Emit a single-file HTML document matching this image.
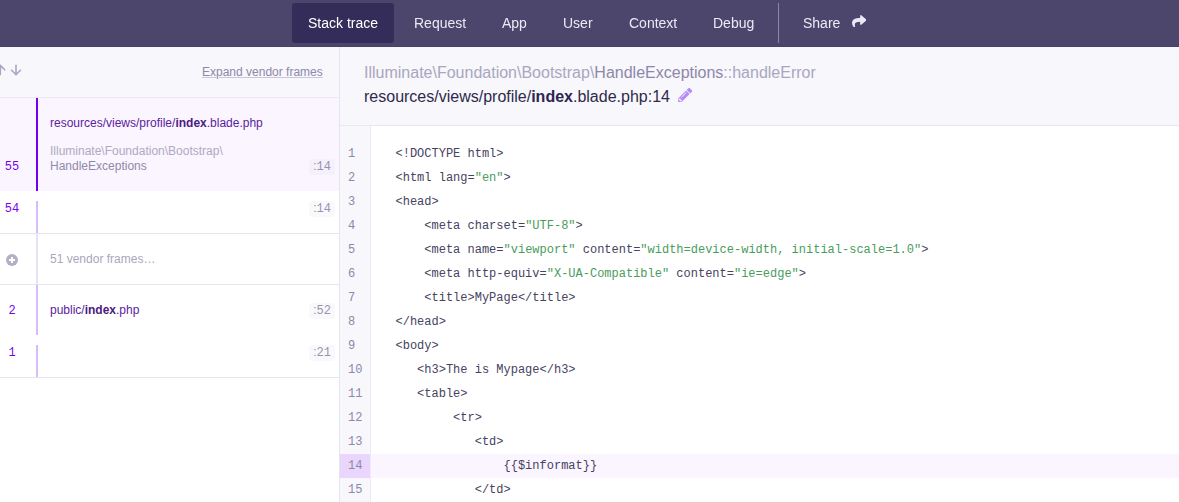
<!DOCTYPE html>
<html><head><meta charset="utf-8">
<style>
*{margin:0;padding:0;box-sizing:border-box}
html,body{width:1179px;height:502px;overflow:hidden;background:#fff;font-family:"Liberation Sans",sans-serif;}
.abs{position:absolute}
#nav{will-change:transform;position:absolute;left:0;top:0;width:1179px;height:47px;background:#4c466c;border-bottom:1px solid #474166}
.tab{position:absolute;top:3px;height:40px;line-height:40px;font-size:14px;color:#ece9f5;padding:0 16px;white-space:nowrap;border-radius:3px}
.tab.active{background:#352d59;color:#fff}
.sep{position:absolute;left:778px;top:3px;width:1px;height:40px;background:#8c87a8}
#left{position:absolute;left:0;top:47px;width:339px;height:455px;background:#fff}
#lhead{position:absolute;left:0;top:0;width:339px;height:51px;background:#f7f7fc;border-bottom:1px solid #ebebf3}
#vline{position:absolute;left:339px;top:47px;width:1px;height:455px;background:#e6e5ef}
#rhead{position:absolute;left:340px;top:47px;width:839px;height:79px;background:#f7f7fc;border-bottom:1px solid #e8e8f0}
.t12{font-size:12px;white-space:nowrap;position:absolute}
.num{position:absolute;left:0;width:24px;text-align:center;font-size:12px;font-family:"Liberation Mono",monospace;color:#7a00ee}
.bar{position:absolute;left:36px;width:2px;background:#d9bdfb}
.line{position:absolute;left:309px;width:26px;padding-left:4.2px;font-family:"Liberation Mono",monospace;font-size:12px;color:#9893b0;background:rgba(232,232,244,0.25);border-radius:3px;height:16px;line-height:16px;white-space:nowrap}
.line i{font-style:normal;font-family:"Liberation Sans",sans-serif;line-height:0}
.hr{position:absolute;left:0;width:339px;height:1px;background:#e6e5ef}
#gutter{position:absolute;left:340px;top:126px;width:31px;height:376px;background:#f7f7fc;border-right:1px solid #ececf4}
.ln{position:absolute;left:348px;font-family:"Liberation Mono",monospace;font-size:12px;color:#8d88a8;height:24px;line-height:24px}
.code{position:absolute;left:395.5px;font-family:"Liberation Mono",monospace;font-size:12px;color:#47425f;height:24px;line-height:24px;white-space:pre}
.s{color:#4a9c5c}
</style></head><body>
<div id="nav">
  <div class="tab active" style="left:292px">Stack trace</div>
  <div class="tab" style="left:398px">Request</div>
  <div class="tab" style="left:486px">App</div>
  <div class="tab" style="left:547px">User</div>
  <div class="tab" style="left:613px">Context</div>
  <div class="tab" style="left:697px">Debug</div>
  <div class="sep"></div>
  <div class="tab" style="left:787px">Share</div>
<svg class="abs" style="left:851.8px;top:14.6px" width="14.5" height="12.6" viewBox="0 31 512 449"><path fill="#ece9f5" d="M503.691 189.836L327.687 37.851C312.281 24.546 288 35.347 288 56.015v80.053C127.371 137.907 0 170.1 0 322.326c0 61.441 39.581 122.309 83.333 154.132 13.653 9.931 33.111-2.533 28.077-18.631C66.066 312.814 132.917 274.316 288 272.085V360c0 20.7 24.3 31.453 39.687 18.164l176.004-152c11.071-9.562 11.086-26.753 0-36.328z"/></svg>
</div>

<div id="left">
  <div id="lhead"></div>
</div>
<div id="vline"></div>
<!-- left header arrows -->
<svg class="abs" style="left:0;top:60px" width="26" height="20" viewBox="0 0 26 20">
  <g fill="none" stroke="#a9a5c3" stroke-width="1.6" stroke-linecap="round" stroke-linejoin="round">
    <path d="M0.3 14.6V5.4M-4.1 9.8L0.3 5.3L4.7 9.8"/>
    <path d="M16 5.4V14.6M11.6 10.2L16 14.7L20.4 10.2"/>
  </g>
</svg>
<div class="t12" style="left:202px;top:63.8px;line-height:16px;color:#8d88a8;text-decoration:underline;text-decoration-color:#c9c5dc">Expand vendor frames</div>

<!-- frame 55 selected -->
<div class="abs" style="left:0;top:98px;width:339px;height:93px;background:#faf5ff"></div>
<div class="abs" style="left:36px;top:98px;width:2px;height:93px;background:#7400f2"></div>
<div class="t12" style="left:50px;top:114.8px;line-height:16px;color:#5a22a0">resources/views/profile/<b style="color:#4b1a82">index</b>.blade.php</div>
<div class="t12" style="left:50px;top:143.8px;line-height:15px;color:#aeaac0">Illuminate\Foundation\Bootstrap\<br><span style="color:#8f8aa8">HandleExceptions</span></div>
<div class="num" style="top:158.8px;line-height:16px">55</div>
<div class="line" style="top:159px"><i>:</i>14</div>

<!-- frame 54 -->
<div class="bar" style="top:201px;height:32px"></div>
<div class="num" style="top:200.8px;line-height:16px">54</div>
<div class="line" style="top:201px"><i>:</i>14</div>
<div class="hr" style="top:233px"></div>

<!-- vendor frames -->
<div class="abs" style="left:36px;top:234px;width:2px;height:50px;background:#e6e5ef"></div>
<svg class="abs" style="left:6px;top:254px" width="12" height="12" viewBox="0 0 12 12">
  <circle cx="6" cy="6" r="6" fill="#b3afc6"/>
  <path d="M6 3V9M3 6H9" stroke="#fff" stroke-width="2"/>
</svg>
<div class="t12" style="left:50px;top:251px;line-height:16px;color:#aaa6bd">51 vendor frames&hellip;</div>
<div class="hr" style="top:284px"></div>

<!-- frame 2 -->
<div class="bar" style="top:285px;height:50px"></div>
<div class="num" style="top:302.8px;line-height:16px">2</div>
<div class="t12" style="left:50px;top:302px;line-height:16px;color:#5a22a0">public/<b style="color:#4b1a82">index</b>.php</div>
<div class="line" style="top:303px"><i>:</i>52</div>

<!-- frame 1 -->
<div class="bar" style="top:345px;height:32px"></div>
<div class="num" style="top:344.8px;line-height:16px">1</div>
<div class="line" style="top:345px"><i>:</i>21</div>
<div class="hr" style="top:377px"></div>

<div id="rhead"></div>
<div class="abs" style="left:364px;top:60.5px;font-size:16px;line-height:24px;white-space:nowrap;color:#aaa6bf">Illuminate\Foundation\Bootstrap\<span style="color:#8d88a8">HandleExceptions</span>::handleError</div>
<div class="abs" style="left:364px;top:84.5px;font-size:16px;line-height:24px;white-space:nowrap;color:#2f2a4a">resources/views/profile/<b style="color:#2d2552">index</b>.blade.php:14</div>
<svg class="abs" style="left:677.9px;top:87.9px" width="14.1" height="14.1" viewBox="0 0 512 512"><path fill="#b48cf6" d="M497.9 142.1l-46.1 46.1c-4.7 4.7-12.3 4.7-17 0l-111-111c-4.7-4.7-4.7-12.3 0-17l46.1-46.1c18.7-18.7 49.1-18.7 67.900 0l60.1 60.1c18.8 18.7 18.8 49.1 0 67.9zM284.2 99.8L21.6 362.4.4 483.9c-2.9 16.400 11.4 30.6 27.8 27.8l121.5-21.3 262.6-262.6c4.7-4.7 4.7-12.3 0-17l-111-111c-4.8-4.7-12.4-4.7-17.1 0zM124.1 339.9c-5.5-5.5-5.5-14.3 0-19.8l154-154c5.5-5.5 14.3-5.5 19.8 0s5.5 14.3 0 19.8l-154 154c-5.5 5.5-14.3 5.5-19.8 0zM88 424h48v36.3l-64.5 11.3-31.1-31.1L51.700 376H88v48z"/></svg>
<div id="gutter"></div>
<div class="abs" style="left:340px;top:454px;width:30px;height:24px;background:#ead6fd"></div>
<div class="abs" style="left:371px;top:454px;width:808px;height:24px;background:#faf5ff"></div>
<div class="ln" style="top:142px">1</div>
<div class="code" style="top:142px">&lt;!DOCTYPE html&gt;</div>
<div class="ln" style="top:166px">2</div>
<div class="code" style="top:166px">&lt;html lang=<span class="s">"en"</span>&gt;</div>
<div class="ln" style="top:190px">3</div>
<div class="code" style="top:190px">&lt;head&gt;</div>
<div class="ln" style="top:214px">4</div>
<div class="code" style="top:214px">    &lt;meta charset=<span class="s">"UTF-8"</span>&gt;</div>
<div class="ln" style="top:238px">5</div>
<div class="code" style="top:238px">    &lt;meta name=<span class="s">"viewport"</span> content=<span class="s">"width=device-width, initial-scale=1.0"</span>&gt;</div>
<div class="ln" style="top:262px">6</div>
<div class="code" style="top:262px">    &lt;meta http-equiv=<span class="s">"X-UA-Compatible"</span> content=<span class="s">"ie=edge"</span>&gt;</div>
<div class="ln" style="top:286px">7</div>
<div class="code" style="top:286px">    &lt;title&gt;MyPage&lt;/title&gt;</div>
<div class="ln" style="top:310px">8</div>
<div class="code" style="top:310px">&lt;/head&gt;</div>
<div class="ln" style="top:334px">9</div>
<div class="code" style="top:334px">&lt;body&gt;</div>
<div class="ln" style="top:358px">10</div>
<div class="code" style="top:358px">   &lt;h3&gt;The is Mypage&lt;/h3&gt;</div>
<div class="ln" style="top:382px">11</div>
<div class="code" style="top:382px">   &lt;table&gt;</div>
<div class="ln" style="top:406px">12</div>
<div class="code" style="top:406px">        &lt;tr&gt;</div>
<div class="ln" style="top:430px">13</div>
<div class="code" style="top:430px">           &lt;td&gt;</div>
<div class="ln" style="top:454px">14</div>
<div class="code" style="top:454px">               {{$informat}}</div>
<div class="ln" style="top:478px">15</div>
<div class="code" style="top:478px">           &lt;/td&gt;</div>
</body></html>
